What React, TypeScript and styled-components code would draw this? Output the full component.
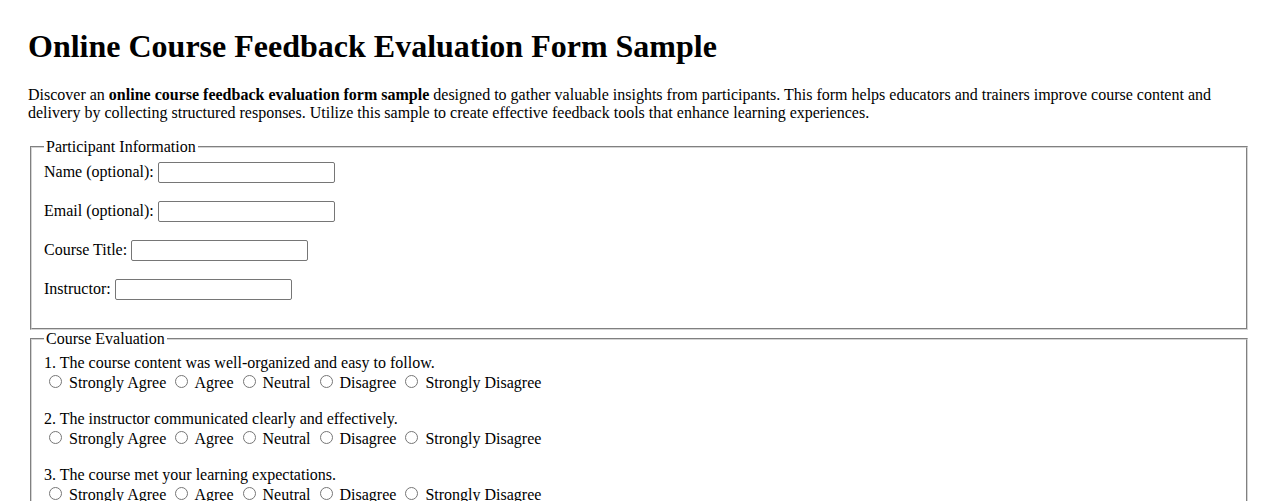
import React from 'react';
import styled, { createGlobalStyle } from 'styled-components';

const GlobalStyle = createGlobalStyle`
  body {
    margin: 8px;
    padding: 20px;
    font-family: "Liberation Serif", "Times New Roman", serif;
    font-size: 16px;
    color: #000;
    background: #fff;
  }
`;

const Title = styled.h1`
  font-size: 2em;
  font-weight: bold;
  margin: 0 0 21px;
`;

const Intro = styled.p`
  margin: 0 0 16px;
`;

const Section = styled.fieldset`
  margin: 0 2px;
  padding: 0.35em 0.75em 0.625em;
  border: 2px groove #d4d4d4;
`;

const Legend = styled.legend`
  padding: 0 2px;
`;

const FieldRow = styled.div`
  margin-bottom: 18px;
`;

const TextInput = styled.input`
  font: 13.33px Arial, "Liberation Sans", sans-serif;
  width: 177px;
  height: 21px;
  box-sizing: border-box;
  border: 1px solid #767676;
  border-radius: 2px;
  padding: 1px 2px;
  margin-left: 4px;
`;

const Question = styled.div`
  margin-bottom: 18px;

  &:first-of-type {
    margin-top: 1px;
  }
`;

const Options = styled.div`
  display: block;
`;

const Radio = styled.input`
  margin: 3px 3px 0 5px;
  width: 13px;
  height: 13px;
`;

type Field = { id: string; label: string };

const fields: Field[] = [
  { id: 'name', label: 'Name (optional):' },
  { id: 'email', label: 'Email (optional):' },
  { id: 'course', label: 'Course Title:' },
  { id: 'instructor', label: 'Instructor:' },
];

const questions = [
  'The course content was well-organized and easy to follow.',
  'The instructor communicated clearly and effectively.',
  'The course met your learning expectations.',
  'The assignments and assessments were relevant.',
];

const choices = ['Strongly Agree', 'Agree', 'Neutral', 'Disagree', 'Strongly Disagree'];

export default function App() {
  return (
    <>
      <GlobalStyle />
      <Title>Online Course Feedback Evaluation Form Sample</Title>
      <Intro>
        Discover an <b>online course feedback evaluation form sample</b> designed to gather valuable
        insights from participants. This form helps educators and trainers improve course content and
        delivery by collecting structured responses. Utilize this sample to create effective feedback
        tools that enhance learning experiences.
      </Intro>
      <form>
        <Section>
          <Legend>Participant Information</Legend>
          {fields.map((f) => (
            <FieldRow key={f.id}>
              <label htmlFor={f.id}>{f.label}</label>
              <TextInput type="text" id={f.id} />
            </FieldRow>
          ))}
        </Section>
        <Section>
          <Legend>Course Evaluation</Legend>
          {questions.map((q, i) => (
            <Question key={i}>
              {i + 1}. {q}
              <Options>
                {choices.map((c) => (
                  <label key={c}>
                    <Radio type="radio" name={`q${i}`} value={c} /> {c}{' '}
                  </label>
                ))}
              </Options>
            </Question>
          ))}
        </Section>
      </form>
    </>
  );
}
